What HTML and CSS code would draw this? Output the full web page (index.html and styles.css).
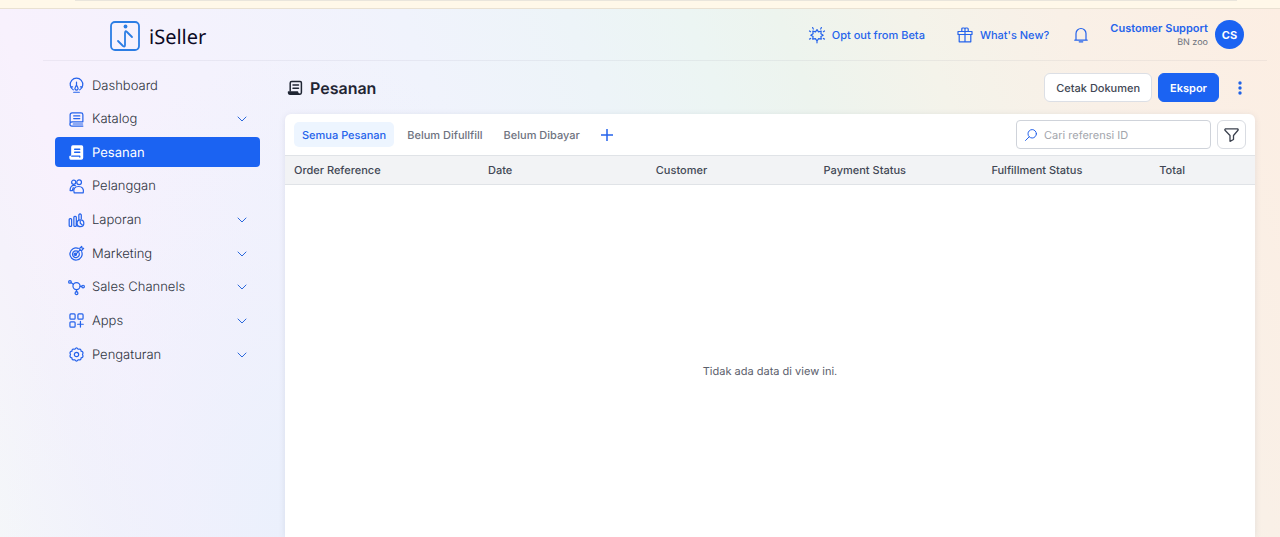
FILE: index.html
```html
<!DOCTYPE html>
<html lang="id">
<head>
<meta charset="utf-8">
<meta name="viewport" content="width=device-width, initial-scale=1">
<title>Pesanan - iSeller</title>
<link rel="stylesheet" href="styles.css">
</head>
<body>
<div class="strip"><div class="strip-line"></div></div>
<header class="topbar">
  <a class="brand" href="#">
    <svg class="brand-mark" viewBox="0 0 30 30"><rect x="1" y="1" width="28" height="28" rx="4"/><path d="M8 20l5 5q2 1.500 2-1V12q0-3 2-1l5 5"/><circle cx="15.500" cy="5.500" r="1.900"/></svg>
    <span>iSeller</span>
  </a>
  <nav class="top-links" aria-label="Akun">
    <a class="top-link" href="#">
      <svg class="icon" viewBox="0 0 16 16"><path d="M8 2.600l1.500 2.200 2.700-.8-.3 2.700 2.300 1.500-2.300 1.300.4 2.600-2.700-.5L8 14l-1.600-2.400-2.700.5.400-2.600-2.300-1.300 2.300-1.500L3.800 4l2.700.8zM4.300 2L3.600.600M11.700 2l.7-1.400M1.600 4.700L.500 4M14.400 4.700l1.100-.7M1.700 11.500l-1.200.6M14.300 11.500l1.200.6M8 14v1.800"/></svg>
      <span>Opt out from Beta</span>
    </a>
    <a class="top-link" href="#">
      <svg class="icon" viewBox="0 0 16 16"><path d="M1 4.500h14v3H1zM2.200 7.500v7.300h11.600V7.500M8 4.500v10.300M4.800 4.500V2q0-1 1-1H7q1 0 1 1v2.500M8 2q0-1 1-1h1.200q1 0 1 1v2.500"/></svg>
      <span>What's New?</span>
    </a>
    <a class="bell" href="#" aria-label="Notifikasi">
      <svg class="icon" viewBox="0 0 16 16"><path d="M3 13V6.500a5 5 0 0 1 10 0V13M1.800 13.200h12.400M6.200 14.800h3.600"/></svg>
    </a>
    <a class="account" href="#">
      <span class="account-text"><span class="account-name">Customer Support</span><span class="account-shop">BN zoo</span></span>
      <span class="avatar">CS</span>
    </a>
  </nav>
</header>
<div class="layout">
  <nav class="sidebar" aria-label="Menu utama">
    <a class="item" href="#"><svg class="icon" viewBox="0 0 16 16"><path d="M4.500 12.600A6.700 6.700 0 1 1 11.500 12.600M8 4.500v3L6.500 10.500a1.700 1.700 0 1 0 3 0L8 7.500M1.800 9.500h2M12.200 9.500h2M5 15.200h6"/></svg><span>Dashboard</span></a>
    <a class="item" href="#"><svg class="icon" viewBox="0 0 16 16"><path d="M1.200 12.500V3a2 2 0 0 1 2-2h9.600a2 2 0 0 1 2 2v7.500H3.200a2 2 0 0 0 0 4.500h11.600M4.500 12.800h10M5 4.200h6.500M5 7h6.500"/></svg><span>Katalog</span><svg class="chevron" viewBox="0 0 10 10"><path d="M1 3l4 4 4-4"/></svg></a>
    <a class="item active" href="#" aria-current="page"><svg class="icon" viewBox="0 0 16 16"><path class="solid" d="M4 1h9.500q1 0 1 1v11.500a1.500 1.500 0 0 1-1.500 1.500H2.500Q1 15 1 13.500V12h2V2q0-1 1-1z"/><path class="cut" d="M6 4.500h5.500M6 7.700h5.500M3 11.900h8.500v1"/></svg><span>Pesanan</span></a>
    <a class="item" href="#"><svg class="icon" viewBox="0 0 16 16"><circle cx="5" cy="3.500" r="2.200"/><circle cx="10.800" cy="3.500" r="2.500"/><path d="M5.500 14.700c-1.500-4 1-6.700 4.700-6.700s6 2.700 5 6.700zM7 7.200C3 6 1 8.500 1.200 12.300h2.500M4.500 9.200l-1 3"/></svg><span>Pelanggan</span></a>
    <a class="item" href="#"><svg class="icon" viewBox="0 0 16 16"><rect x=".2" y="6" width="2.600" height="8.300" rx="1"/><rect x="5.200" y="3.500" width="2.600" height="10.800" rx="1"/><path d="M10.500 7V2q1.200-2 2.600 0v4M7.900 11.500l1 2.500"/><circle cx="12.200" cy="11" r="3.600"/><path d="M12 8.500V11l2 1.500"/></svg><span>Laporan</span><svg class="chevron" viewBox="0 0 10 10"><path d="M1 3l4 4 4-4"/></svg></a>
    <a class="item" href="#"><svg class="icon" viewBox="0 0 16 16"><path d="M10 2.500a6.500 6.500 0 1 0 3.500 3.500M9 5.500a3.600 3.600 0 1 0 1.700 1.800M7 9l5-5M7.800 8.300a1.200 1.200 0 1 1-1-.6M11.500 4.500V2.300L13.500.500l.4 1.700 1.700.4-1.900 2z"/></svg><span>Marketing</span><svg class="chevron" viewBox="0 0 10 10"><path d="M1 3l4 4 4-4"/></svg></a>
    <a class="item" href="#"><svg class="icon" viewBox="0 0 16 16"><circle cx="8" cy="6.500" r="3.800"/><circle cx="1" cy="2" r="1.400"/><circle cx="15" cy="7" r="1.400"/><circle cx="8" cy="14" r="1.500"/><path d="M2.200 2.800l2.400 1.800M11.800 6.700h1.800M8 10.300v2.200"/></svg><span>Sales Channels</span><svg class="chevron" viewBox="0 0 10 10"><path d="M1 3l4 4 4-4"/></svg></a>
    <a class="item" href="#"><svg class="icon" viewBox="0 0 16 16"><rect x="1" y="1" width="5.500" height="5.500" rx="1"/><rect x="9.500" y="1" width="5.500" height="5.500" rx="1"/><rect x="1" y="9.500" width="5.500" height="5.500" rx="1"/><path d="M12.200 9v6M9.200 12h6"/></svg><span>Apps</span><svg class="chevron" viewBox="0 0 10 10"><path d="M1 3l4 4 4-4"/></svg></a>
    <a class="item" href="#"><svg class="icon" viewBox="0 0 16 16"><path d="M6.300 2.400Q8-.400 9.700 2.400 12.900 1.500 12.900 4.400q3.100.7 1.500 3.600 1.600 2.900-1.500 3.600 0 2.900-3.200 2Q8 16.400 6.300 13.600q-3.200.9-3.200-2Q0 10.900 1.600 8 0 5.100 3.100 4.400q0-2.900 3.200-2z"/><circle cx="8" cy="8" r="2.300"/></svg><span>Pengaturan</span><svg class="chevron" viewBox="0 0 10 10"><path d="M1 3l4 4 4-4"/></svg></a>
  </nav>
  <main class="main">
    <div class="page-head">
      <h1 class="title"><svg class="icon" viewBox="0 0 16 16"><path d="M3.200 11V3q0-1.500 1.500-1.500h8.500q1.200 0 1.200 1.200V12.500q0 1.700-1.500 1.700M6 5h5.500M6 8.200h5.500"/><path class="solid" d="M1.500 12h9q0 2.200 2 2.200H3q-1.500 0-1.500-2.200z"/></svg><span>Pesanan</span></h1>
      <div class="actions">
        <button class="btn" type="button">Cetak Dokumen</button>
        <button class="btn primary" type="button">Ekspor</button>
        <button class="more" type="button" aria-label="Lainnya"><svg viewBox="0 0 4 14"><circle cx="2" cy="2" r="1.700"/><circle cx="2" cy="7" r="1.700"/><circle cx="2" cy="12" r="1.700"/></svg></button>
      </div>
    </div>
    <section class="card">
      <div class="toolbar">
        <div class="tabs">
          <button class="tab selected" type="button">Semua Pesanan</button>
          <button class="tab" type="button">Belum Difullfill</button>
          <button class="tab" type="button">Belum Dibayar</button>
          <button class="add" type="button" aria-label="Tambah view"><svg viewBox="0 0 12 12"><path d="M6 0v12M0 6h12"/></svg></button>
        </div>
        <div class="filters">
          <label class="search">
            <svg viewBox="0 0 12 12"><circle cx="7.200" cy="4.800" r="4.200"/><path d="M4.200 7.800L.500 11.500"/></svg>
            <input type="text" placeholder="Cari referensi ID" aria-label="Cari referensi ID">
          </label>
          <button class="filter" type="button" aria-label="Filter"><svg viewBox="0 0 15 14"><path d="M1.500.8h12q1 .5.500 1.500L9.500 7.500v4L6 13.300V7.500L1 2.300Q.500 1.300 1.500.8z"/></svg></button>
        </div>
      </div>
      <table class="orders">
        <thead><tr><th class="col-ref">Order Reference</th><th class="col">Date</th><th class="col">Customer</th><th class="col">Payment Status</th><th class="col">Fulfillment Status</th><th>Total</th></tr></thead>
      </table>
      <p class="empty">Tidak ada data di view ini.</p>
    </section>
  </main>
</div>
</body>
</html>
```
FILE: styles.css
```css
* { box-sizing: border-box; }
body {
  margin: 0;
  min-height: 100vh;
  display: flex;
  flex-direction: column;
  font-family: Inter, "Liberation Sans", sans-serif;
  font-size: 11px;
  text-rendering: geometricPrecision;
  color: #414754;
  background:
    radial-gradient(ellipse 26% 90% at 24% 100%, #eaf0fc 0%, rgba(234, 240, 252, 0) 100%),
    linear-gradient(68deg, #f5f7f9 0%, #f5f2fb 8%, #f8f1fd 14%, #f4f2fd 26%, #f0f3fc 41%, #edf4f8 52%, #ecf5f3 60%, #edf4ee 66%, #f4f3ea 75%, #f9f0e7 85%, #fceee3 100%);
}
a { color: inherit; text-decoration: none; }
button { font: inherit; text-rendering: inherit; cursor: pointer; }
svg { display: block; flex: none; }
svg path, svg circle, svg rect {
  fill: none;
  stroke: currentColor;
  stroke-linecap: round;
  stroke-linejoin: round;
}
.icon { width: 16px; height: 16px; overflow: visible; }
svg .solid { fill: currentColor; }
svg .cut { stroke: #1b63f2; stroke-width: 1.4; }

.strip {
  height: 9px;
  padding: 0 43px 0 75px;
  background: #fff8e9;
  border-bottom: 1px solid #e9e1d2;
}
.strip-line { height: 1px; background: #e9e5dc; }

.topbar {
  display: flex;
  justify-content: space-between;
  align-items: center;
  height: 52px;
  margin: 0 13px 0 43px;
  padding: 0 23px 0 67px;
  border-bottom: 1px solid rgba(90, 90, 120, 0.07);
}
.brand {
  display: flex;
  align-items: center;
  gap: 9px;
  padding-top: 3px;
  font-family: "Noto Sans", sans-serif;
  font-size: 20px;
  color: #0c0a26;
}
.brand-mark { width: 30px; height: 30px; color: #2b7de4; }
.brand-mark path, .brand-mark rect { stroke-width: 1.8; }
.brand-mark circle { fill: currentColor; stroke: none; }
.top-links { display: flex; align-items: center; color: #2563eb; }
.top-link { display: flex; align-items: center; gap: 7px; margin-right: 32px; font-weight: 500; }
.top-link + .bell { margin-left: -8px; }
.top-links .icon path { stroke-width: 1.2; }
.bell { margin-right: 21px; }
.account { display: flex; align-items: center; gap: 7px; }
.account-text { display: flex; flex-direction: column; align-items: flex-end; gap: 2px; }
.account-name { font-weight: 600; line-height: 14px; }
.account-shop { font-size: 9px; line-height: 12px; color: #6d717c; }
.avatar {
  display: grid;
  place-items: center;
  width: 29px;
  height: 29px;
  border-radius: 50%;
  background: #1b63f2;
  color: #fff;
  font-weight: 700;
}

.layout { flex: 1; display: flex; gap: 25px; padding: 0 25px 0 55px; }
.sidebar {
  display: flex;
  flex-direction: column;
  justify-content: space-between;
  width: 205px;
  height: 299px;
  margin-top: 9px;
  flex: none;
}
.item {
  display: flex;
  align-items: center;
  gap: 8px;
  height: 30px;
  padding: 1px 13px 0 14px;
  border-radius: 4px;
  font-size: 13px;
  font-weight: 300;
  color: #2f3441;
}
.item .icon { width: 15px; height: 15px; color: #2563eb; }
.item .icon :not(.cut) { stroke-width: 1.3; }
.item.active { background: #1b63f2; color: #fff; font-weight: 400; }
.item.active .icon { color: #fff; }
.chevron { width: 10px; height: 10px; margin-left: auto; color: #2b68dc; }

.main { flex: 1; min-width: 0; display: flex; flex-direction: column; padding-top: 12px; }
.page-head { display: flex; justify-content: space-between; align-items: center; margin-bottom: 12px; }
.title {
  display: flex;
  align-items: center;
  gap: 7px;
  margin: 0;
  padding-left: 2px;
  font-size: 16px;
  font-weight: 600;
  color: #1f2533;
}
.title .icon path { stroke-width: 1.5; }
.actions { display: flex; align-items: center; gap: 6px; padding-right: 6px; }
.btn {
  height: 29px;
  padding: 0 11px;
  border: 1px solid #dcdfe5;
  border-radius: 6px;
  background: #fff;
  color: #414754;
  font-weight: 500;
}
.btn.primary { border-color: #1b63f2; background: #1b63f2; color: #fff; font-weight: 600; }
.more { padding: 6px 7px; margin-left: 6px; border: 0; background: none; color: #1f62e6; }
.more svg { width: 4px; height: 14px; }
.more circle { fill: currentColor; stroke: none; }

.card {
  flex: 1;
  display: flex;
  flex-direction: column;
  border-radius: 6px 6px 0 0;
  background: #fff;
  box-shadow: 0 1px 6px rgba(70, 80, 120, 0.12);
}
.toolbar { display: flex; justify-content: space-between; align-items: center; height: 41px; padding: 0 9px; }
.tabs { display: flex; align-items: center; gap: 5px; }
.tab {
  height: 25px;
  padding: 0 8px;
  border: 0;
  border-radius: 5px;
  background: none;
  color: #6e7380;
  font-weight: 500;
}
.tab.selected { background: #edf5ff; color: #2563eb; }
.add { padding: 6px; margin-left: 2px; border: 0; background: none; color: #2563eb; }
.add svg { width: 12px; height: 12px; }
.add path { stroke-width: 1.5; }
.filters { display: flex; gap: 6px; }
.search {
  display: flex;
  align-items: center;
  gap: 7px;
  width: 195px;
  height: 29px;
  padding: 0 8px;
  border: 1px solid #cfd3da;
  border-radius: 4px;
}
.search svg { width: 12px; height: 12px; color: #2563eb; }
.search input {
  flex: 1;
  min-width: 0;
  padding: 0;
  border: 0;
  outline: 0;
  background: none;
  font: inherit;
  text-rendering: inherit;
  color: #414754;
}
.search input::placeholder { color: #a2a5ac; opacity: 1; }
.filter {
  display: grid;
  place-items: center;
  width: 29px;
  height: 29px;
  padding: 0;
  border: 1px solid #d9dce2;
  border-radius: 6px;
  background: #fff;
  color: #3b414e;
}
.filter svg { width: 15px; height: 14px; }
.filter path { stroke-width: 1.3; }
.orders { width: 100%; table-layout: fixed; border-collapse: collapse; }
.orders th {
  height: 29px;
  padding: 0 9px;
  border: solid #e0e3e7;
  border-width: 1px 0;
  background: #f2f3f5;
  text-align: left;
  font-weight: 500;
}
.col-ref { width: 20%; }
.col { width: 17.3%; }
.empty {
  flex: 1;
  display: flex;
  justify-content: center;
  align-items: center;
  margin: 0;
  padding-top: 20px;
  color: #5b606c;
}
```
